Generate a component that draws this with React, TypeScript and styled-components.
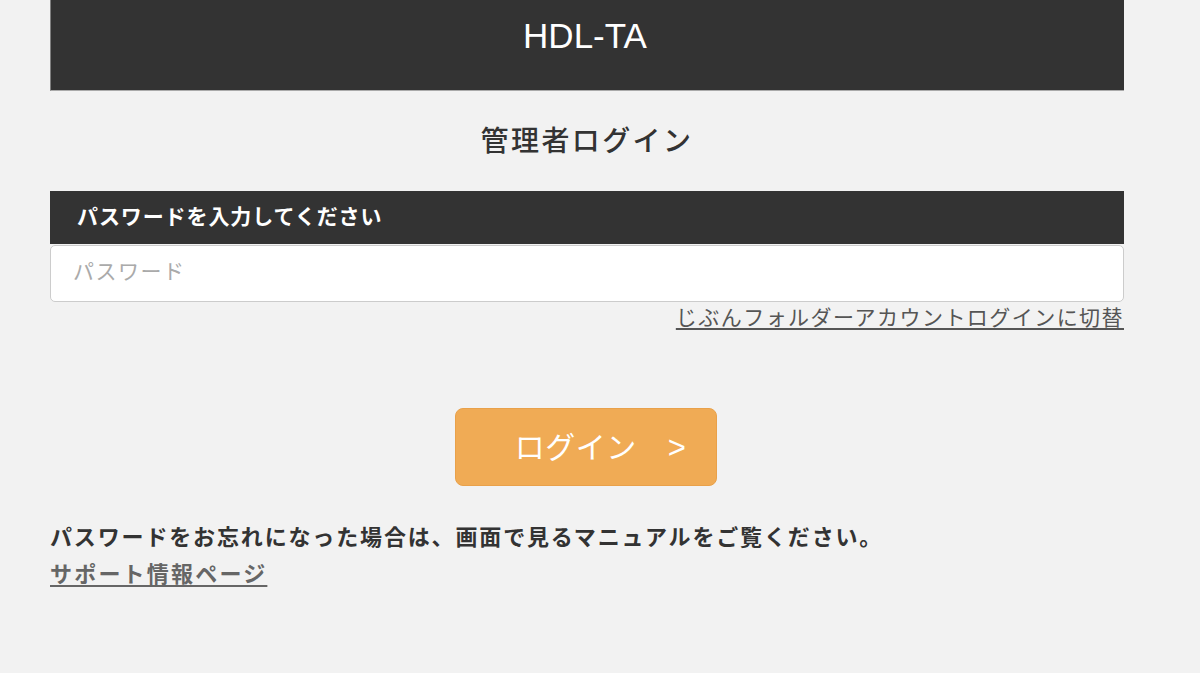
import React from "react";
import styled, { createGlobalStyle } from "styled-components";

const Global = createGlobalStyle`
  html, body { margin: 0; padding: 0; background: #f2f2f2; }
  body { font-family: "Noto Sans CJK JP", "Noto Sans", sans-serif; color: #333; }
`;

const Page = styled.div`
  width: 1074px;
  margin-left: 50px;
  display: flex;
  flex-direction: column;
`;

const Header = styled.header`
  height: 91px;
  background: #333;
  border-left: 1px solid #808080;
  border-bottom: 1px solid #aaa;
  display: flex;
  align-items: center;
  justify-content: center;
  color: #fff;
  font-family: "Liberation Sans", Arial, sans-serif;
  font-size: 35px;
  padding: 0 5px 19px 0;
  box-sizing: border-box;
`;

const Title = styled.h1`
  margin: 28px 0 0;
  text-align: center;
  font-size: 28px;
  font-weight: 500;
  letter-spacing: 2.4px;
  line-height: 40px;
  color: #333;
`;

const FormBox = styled.div`
  margin-top: 32px;
  display: flex;
  flex-direction: column;
`;

const Label = styled.div`
  height: 53px;
  background: #333;
  color: #fff;
  font-size: 21px;
  font-weight: 700;
  letter-spacing: 0.9px;
  display: flex;
  align-items: center;
  padding: 0 0 5px 27px;
  box-sizing: border-box;
`;

const Input = styled.input`
  height: 57px;
  margin-top: 1px;
  box-sizing: border-box;
  border: 1px solid #ccc;
  border-radius: 5px;
  background: #fff;
  padding: 0 0 7px 22px;
  font-size: 21px;
  letter-spacing: 1.5px;
  font-family: "Noto Sans CJK JP", sans-serif;
  color: #333;
  outline: none;
  &::placeholder { color: #aaa; }
`;

const SwitchRow = styled.div`
  display: flex;
  justify-content: flex-end;
  margin-top: -1px;
`;

const LinkText = styled.a`
  color: #555;
  font-size: 21px;
  letter-spacing: 1.45px;
  text-decoration: underline;
  text-underline-offset: 3px;
  line-height: 30px;
  cursor: pointer;
`;

const ButtonRow = styled.div`
  display: flex;
  justify-content: center;
  margin-top: 77px;
`;

const LoginButton = styled.button`
  width: 262px;
  height: 78px;
  background: #f0ab55;
  border: 1px solid #e9a14a;
  border-radius: 8px;
  color: #fff;
  font-family: "Noto Sans CJK JP", sans-serif;
  font-size: 30px;
  letter-spacing: 0.5px;
  display: flex;
  align-items: center;
  justify-content: center;
  gap: 31px;
  padding: 0 0 4px 29px;
  margin-left: -2px;
  box-sizing: border-box;
  cursor: pointer;
`;

const Arrow = styled.span`
  font-family: "Liberation Sans", Arial, sans-serif;
  font-size: 31px;
  margin-top: 6px;
`;

const Note = styled.p`
  margin: 31px 0 0;
  font-size: 22px;
  font-weight: 700;
  letter-spacing: 1.85px;
  line-height: 36px;
  color: #333;
`;

const SupportLink = styled.a`
  align-self: flex-start;
  font-size: 22px;
  font-weight: 700;
  letter-spacing: 2.2px;
  line-height: 38px;
  color: #666;
  text-decoration: underline;
  text-underline-offset: 3px;
  cursor: pointer;
`;

export default function App() {
  return (
    <>
      <Global />
      <Page>
        <Header>HDL-TA</Header>
        <Title>管理者ログイン</Title>
        <FormBox>
          <Label>パスワードを入力してください</Label>
          <Input type="password" placeholder="パスワード" />
        </FormBox>
        <SwitchRow>
          <LinkText>じぶんフォルダーアカウントログインに切替</LinkText>
        </SwitchRow>
        <ButtonRow>
          <LoginButton>
            <span>ログイン</span>
            <Arrow>&gt;</Arrow>
          </LoginButton>
        </ButtonRow>
        <Note>パスワードをお忘れになった場合は、画面で見るマニュアルをご覧ください。</Note>
        <SupportLink>サポート情報ページ</SupportLink>
      </Page>
    </>
  );
}
